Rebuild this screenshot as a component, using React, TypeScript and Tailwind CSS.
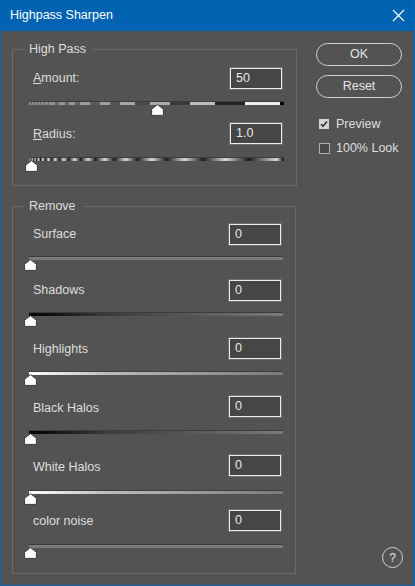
import React from "react";

const FONT = "font-['Liberation_Sans','Arial',sans-serif]";

function Thumb({ left }: { left: number }) {
  return (
    <svg
      className="absolute top-[3px]"
      style={{ left }}
      width="13"
      height="12"
      viewBox="0 0 13 12"
    >
      <path
        d="M6.5 0.6 L12.4 5.2 L12.4 11.4 L0.6 11.4 L0.6 5.2 Z"
        fill="#ffffff"
        stroke="#3a3a3a"
        strokeWidth="1"
        strokeLinejoin="round"
      />
    </svg>
  );
}

function Slider({
  track,
  left,
  cls,
}: {
  track: React.ReactNode;
  left: number;
  cls: string;
}) {
  return (
    <div className={"relative h-[15px] " + cls}>
      <div className="h-[4px] w-full border-t border-[#3c3c3c] flex overflow-hidden">
        {track}
      </div>
      <Thumb left={left} />
    </div>
  );
}

function NumBox({ value }: { value: string }) {
  return (
    <div className="w-[52px] h-[21px] mr-[2px] border border-[#ececec] bg-[#464646] shadow-[0_0_0_1px_#6e6e6e] flex items-center pl-[5px] text-[12.5px] text-[#e8e8e8]">
      {value}
    </div>
  );
}

function Row({
  label,
  value,
  cls,
  labelCls = "",
}: {
  label: React.ReactNode;
  value: string;
  cls: string;
  labelCls?: string;
}) {
  return (
    <div className={"flex items-center justify-between h-[20px] " + cls}>
      <span className={"ml-[4px] text-[12.5px] text-[#dedede] " + labelCls}>{label}</span>
      <NumBox value={value} />
    </div>
  );
}

const amountSegs: [number, string][] = [
  [2, "#8a8a8a"], [1, "#6a6a6a"], [2, "#8a8a8a"], [1, "#6a6a6a"], [2, "#8a8a8a"], [1, "#6a6a6a"],
  [2, "#8a8a8a"], [1, "#6a6a6a"], [3, "#8a8a8a"], [1, "#6a6a6a"], [3, "#8a8a8a"], [1, "#6a6a6a"],
  [6, "#909090"], [4, "#6a6a6a"], [6, "#959595"], [4, "#666666"], [6, "#989898"], [5, "#626262"],
  [10, "#9c9c9c"], [10, "#5c5c5c"], [10, "#a0a0a0"], [10, "#575757"], [15, "#a6a6a6"],
  [15, "#4a4a4a"], [20, "#acacac"], [20, "#3a3a3a"], [25, "#bdbdbd"], [30, "#232323"],
  [35, "#eeeeee"], [4, "#000000"],
];

function AmountTrack() {
  return (
    <>
      {amountSegs.map(([w, c], i) => (
        <div key={i} className="h-full shrink-0" style={{ width: w, background: c }} />
      ))}
      <div className="flex-1 bg-black" />
    </>
  );
}

function radiusGradient() {
  const total = 254;
  let x = 0;
  let p = 2;
  const stops: string[] = [];
  while (x < total) {
    const a = x;
    const m = Math.min(x + p / 2, total);
    const b = Math.min(x + p, total);
    stops.push(`#1c1c1c ${a.toFixed(1)}px`);
    stops.push(`#d8d8d8 ${m.toFixed(1)}px`);
    stops.push(`#1c1c1c ${b.toFixed(1)}px`);
    x += p;
    p *= 1.25;
  }
  return `linear-gradient(to right, ${stops.join(", ")})`;
}

function RadiusTrack() {
  return <div className="h-full w-full" style={{ background: radiusGradient() }} />;
}

const removeRows = [
  { label: "Surface", rowCls: "mt-[10px]", labelCls: "", sCls: "mt-[12px]", track: "bg-[#7a7a7a]" },
  { label: "Shadows", rowCls: "mt-[9px]", labelCls: "", sCls: "mt-[12px]", track: "bg-[linear-gradient(to_right,#000000,#3a3a3a_30%,#7a7a7a)]" },
  { label: "Highlights", rowCls: "mt-[11px]", labelCls: "pt-[2px]", sCls: "mt-[13px]", track: "bg-[linear-gradient(to_right,#ffffff,#bdbdbd_30%,#7a7a7a)]" },
  { label: "Black Halos", rowCls: "mt-[10px]", labelCls: "pt-[5px]", sCls: "mt-[14px]", track: "bg-[linear-gradient(to_right,#000000,#3a3a3a_30%,#7a7a7a)]" },
  { label: "White Halos", rowCls: "mt-[10px]", labelCls: "pt-[4px]", sCls: "mt-[15px]", track: "bg-[linear-gradient(to_right,#ffffff,#bdbdbd_30%,#7a7a7a)]" },
  { label: "color noise", rowCls: "mt-[5px]", labelCls: "pt-[2px]", sCls: "mt-[14px]", track: "bg-[#7a7a7a]" },
];

export default function App() {
  return (
    <div className={"w-[415px] h-[586px] flex flex-col bg-[#535353] border-l border-r border-b border-[#0a64b4] " + FONT}>
      <div className="h-[31px] shrink-0 bg-[#0063b1] flex items-center justify-between pl-[9px] pr-[9px]">
        <span className="text-white text-[12.5px]">Highpass Sharpen</span>
        <svg width="13" height="13" viewBox="0 0 13 13">
          <path d="M1 1 L12 12 M12 1 L1 12" stroke="#ffffff" strokeWidth="1.1" />
        </svg>
      </div>
      <div className="flex-1 flex pt-[10px] pl-[11px]">
        <div className="w-[284px] flex flex-col">
          <fieldset className="border border-[#6a6a6a] ">
            <legend className="ml-[12px] pl-[4px] pr-[7px] leading-[16px] text-[12.5px] text-[#dedede]">High Pass</legend>
            <div className="pl-[16px] pr-[12px] pt-[11px] pb-[13px] flex flex-col">
              <Row label={<><span className="underline">A</span>mount:</>} value="50" cls="" />
              <Slider cls="mt-[13px]" left={122} track={<AmountTrack />} />
              <Row label={<><span className="underline">R</span>adius:</>} value="1.0" cls="mt-[7px]" labelCls="pt-[3px]" />
              <Slider cls="mt-[14px]" left={-4} track={<RadiusTrack />} />
            </div>
          </fieldset>
          <fieldset className="border border-[#6a6a6a] mt-[12px]">
            <legend className="ml-[11px] pl-[5px] pr-[8px] leading-[16px] text-[12.5px] text-[#dedede]">Remove</legend>
            <div className="pl-[16px] pr-[12px] pb-[14px] flex flex-col">
              {removeRows.map((r) => (
                <React.Fragment key={r.label}>
                  <Row label={r.label} value="0" cls={r.rowCls} labelCls={r.labelCls} />
                  <Slider cls={r.sCls} left={-5} track={<div className={"h-full w-full " + r.track} />} />
                </React.Fragment>
              ))}
            </div>
          </fieldset>
        </div>
        <div className="flex-1 flex flex-col pl-[20px] pr-[11px] pt-[2px] pb-[17px]">
          <button className="w-[86px] h-[23px] rounded-full border border-[#d0d0d0] text-[12.5px] text-[#e6e6e6] flex items-center justify-center">OK</button>
          <button className="w-[86px] h-[23px] mt-[9px] rounded-full border border-[#d0d0d0] text-[12.5px] text-[#e6e6e6] flex items-center justify-center">Reset</button>
          <div className="flex items-center mt-[20px] ml-[3px] h-[12px]">
            <div className="w-[10px] h-[10px] bg-[#d4d4d4] flex items-center justify-center">
              <svg width="8" height="8" viewBox="0 0 8 8">
                <path d="M1 4.2 L3 6.2 L7 1.6" stroke="#2e2e2e" strokeWidth="1.6" fill="none" />
              </svg>
            </div>
            <span className="ml-[7px] text-[12.5px] text-[#dedede]">Preview</span>
          </div>
          <div className="flex items-center mt-[12px] ml-[3px] h-[12px]">
            <div className="w-[11px] h-[11px] border border-[#b0b0b0] bg-[#4a4a4a]" />
            <span className="ml-[6px] text-[12.5px] text-[#dedede]">100% Look</span>
          </div>
          <div className="mt-auto self-end w-[21px] h-[21px] rounded-full border border-[#d0d0d0] flex items-center justify-center text-[12px] text-[#e6e6e6]">?</div>
        </div>
      </div>
    </div>
  );
}
